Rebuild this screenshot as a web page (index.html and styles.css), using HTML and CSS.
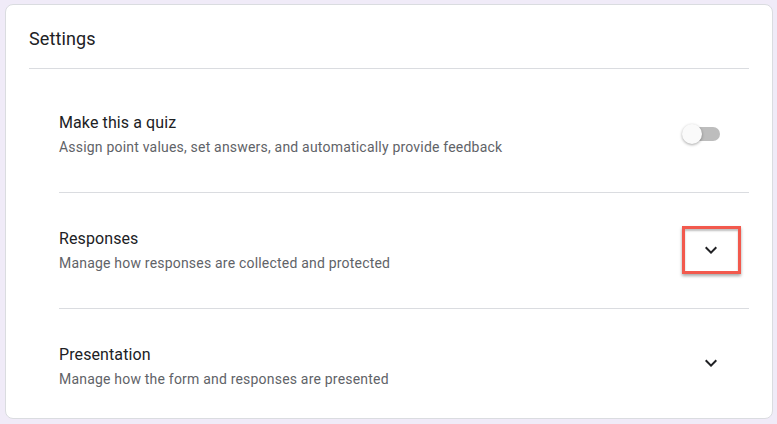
FILE: index.html
```html
<!DOCTYPE html>
<html lang="en">
<head>
  <meta charset="UTF-8">
  <meta name="viewport" content="width=device-width, initial-scale=1.0">
  <title>Settings</title>
  <link rel="stylesheet" href="styles.css">
</head>
<body>
  <!-- settings card -->
  <div class="card">
    <h1 class="card-title">Settings</h1>

    <div class="setting-list">
      <div class="setting-row">
        <div class="setting-text">
          <h2 class="setting-name">Make this a quiz</h2>
          <p class="setting-desc">Assign point values, set answers, and automatically provide feedback</p>
        </div>
        <div class="setting-control">
          <div class="switch">
            <div class="switch-track"></div>
            <div class="switch-thumb"></div>
          </div>
        </div>
      </div>

      <div class="setting-row">
        <div class="setting-text">
          <h2 class="setting-name">Responses</h2>
          <p class="setting-desc">Manage how responses are collected and protected</p>
        </div>
        <div class="setting-control highlight">
          <svg class="chevron" viewBox="0 0 24 24" width="24" height="24">
            <path d="M16.59 8.59L12 13.17 7.41 8.59 6 10l6 6 6-6z"/>
          </svg>
        </div>
      </div>

      <div class="setting-row">
        <div class="setting-text">
          <h2 class="setting-name">Presentation</h2>
          <p class="setting-desc">Manage how the form and responses are presented</p>
        </div>
        <div class="setting-control">
          <svg class="chevron" viewBox="0 0 24 24" width="24" height="24">
            <path d="M16.59 8.59L12 13.17 7.41 8.59 6 10l6 6 6-6z"/>
          </svg>
        </div>
      </div>
    </div>
  </div>
</body>
</html>
```

FILE: styles.css
```css
* {
  margin: 0;
  padding: 0;
  box-sizing: border-box;
}

body {
  font-family: Roboto, 'Liberation Sans', Arial, sans-serif;
  background: #f0ebf8;
  color: #202124;
  padding: 4px 4px 5px 5px;
  height: 424px;
  overflow: hidden;
}

/* card */
.card {
  background: #fff;
  border: 1px solid #dadce0;
  border-radius: 8px;
  height: 415px;
  padding: 21px 23px 0 23px;
}

.card-title {
  font-size: 18px;
  font-weight: 400;
  line-height: 26px;
  padding-bottom: 16px;
  border-bottom: 1px solid #dadce0;
  letter-spacing: 0.1px;
}

.setting-list {
  padding: 8px 0 0 30px;
}

.setting-row {
  display: flex;
  align-items: center;
  padding: 33px 8px 34px 0;
  border-bottom: 1px solid #dadce0;
}

.setting-row:last-child {
  border-bottom: none;
  padding-bottom: 29px;
}

.setting-text {
  flex: 1;
  display: flex;
  flex-direction: column;
  gap: 2px;
}

.setting-name {
  font-size: 16px;
  font-weight: 400;
  line-height: 24px;
  letter-spacing: 0.1px;
}

.setting-desc {
  font-size: 14px;
  line-height: 20px;
  color: #5f6368;
  letter-spacing: 0.2px;
}

/* controls */
.setting-control {
  width: 59px;
  height: 48px;
  display: flex;
  align-items: center;
  justify-content: center;
}

.setting-control.highlight {
  border: 3px solid #f2594d;
  box-shadow: 0 2px 3px rgba(0, 0, 0, 0.35), inset 0 2px 2px rgba(0, 0, 0, 0.25);
}

.chevron {
  fill: #202124;
  margin-right: 2px;
}

.setting-row:last-child .chevron {
  margin-bottom: 6px;
}

.switch {
  position: relative;
  width: 38px;
  height: 20px;
  margin-right: 21px;
}

.switch-track {
  position: absolute;
  left: 2px;
  top: 3px;
  width: 36px;
  height: 14px;
  border-radius: 7px;
  background: #bdbdbd;
}

.switch-thumb {
  position: absolute;
  left: 0;
  top: 0;
  width: 20px;
  height: 20px;
  border-radius: 50%;
  background: #fafafa;
  box-shadow: 0 1px 3px rgba(0, 0, 0, 0.35);
}
```
